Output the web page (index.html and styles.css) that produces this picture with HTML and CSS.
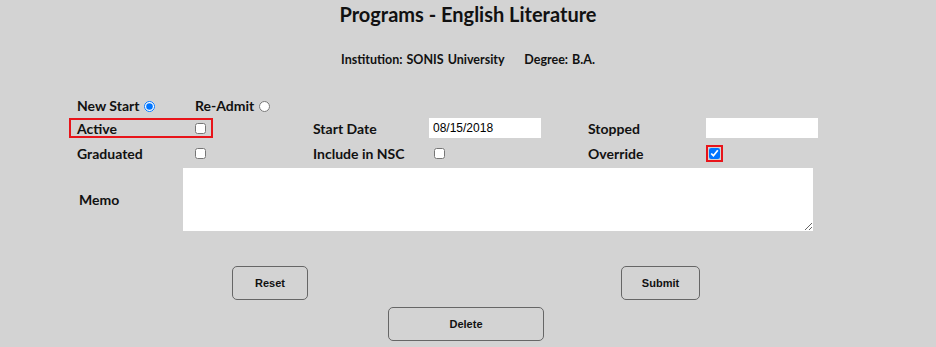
FILE: index.html
```html
<!DOCTYPE html>
<html lang="en">
  <head>
    <meta charset="utf-8" />
    <title>Programs - English Literature</title>
    <link rel="stylesheet" href="styles.css">
  </head>
  <body>
    <h1 class="title">Programs - English Literature</h1>
    <div class="info">
      <span>Institution: SONIS University</span>
      <span>Degree: B.A.</span>
    </div>

    <form class="program-form">
      <!-- start type -->
      <div class="row row-start">
        <label class="start-opt start-new">New Start <input type="radio" name="start" checked></label>
        <label class="start-opt">Re-Admit <input type="radio" name="start"></label>
      </div>

      <div class="row row-mid">
        <div class="cell cell-a flagged">
          <span>Active</span>
          <input type="checkbox">
        </div>
        <div class="cell cell-b"></div>
        <div class="cell cell-c"><span>Start Date</span></div>
        <div class="cell cell-d"><input class="text-input" type="text" value="08/15/2018"></div>
        <div class="cell cell-e"><span>Stopped</span></div>
        <div class="cell cell-f"><input class="text-input" type="text"></div>
      </div>

      <div class="row row-low">
        <div class="cell cell-a">
          <span>Graduated</span>
          <input type="checkbox">
        </div>
        <div class="cell cell-b"></div>
        <div class="cell cell-c"><span>Include in NSC</span></div>
        <div class="cell cell-d"><input class="nsc-check" type="checkbox"></div>
        <div class="cell cell-e"><span>Override</span></div>
        <div class="cell cell-f"><input class="override-check" type="checkbox" checked></div>
      </div>

      <div class="row row-memo">
        <label class="memo-label">Memo</label>
        <textarea class="memo"></textarea>
      </div>

      <div class="buttons buttons-top">
        <button type="button" class="btn btn-reset">Reset</button>
        <button type="button" class="btn btn-submit">Submit</button>
      </div>
      <div class="buttons">
        <button type="button" class="btn btn-delete">Delete</button>
      </div>
    </form>
  </body>
</html>
```

FILE: styles.css
```css
* {
  box-sizing: border-box;
}

body {
  margin: 0;
  background-color: #d3d3d3;
  color: #111;
  font-family: Lato, "DejaVu Sans", sans-serif;
  font-weight: bold;
}

.title {
  margin: 2px 0 0;
  font-size: 20px;
  line-height: 24px;
  text-align: center;
}

.info {
  margin-top: 26px;
  font-size: 12.5px;
  line-height: 16px;
  text-align: center;
  word-spacing: 1px;
}

.info span + span {
  margin-left: 16px;
}

.program-form {
  font-size: 14px;
}

.row {
  display: flex;
  align-items: center;
}

/* start type radios */
.row-start {
  margin-top: 28px;
  height: 18px;
  padding-left: 77px;
}

.start-opt {
  display: flex;
  align-items: center;
}

.start-new {
  width: 118px;
}

input[type="radio"] {
  width: 11px;
  height: 11px;
  margin: 2px 0 0 5px;
}

input[type="checkbox"] {
  width: 11px;
  height: 11px;
  margin: 0;
}

.row-mid {
  margin-top: 4px;
  height: 20px;
  padding-left: 69px;
}

.row-low {
  margin-top: 6px;
  height: 18px;
  padding-left: 69px;
}

.cell {
  display: flex;
  align-items: center;
  height: 100%;
}

.cell-a {
  width: 144px;
  padding: 0 5px 0 6px;
  justify-content: space-between;
  border: 2px solid transparent;
}

.cell-a.flagged {
  border-color: #e8141a;
}

.cell-b { width: 100px; }
.cell-c { width: 116px; }
.cell-d { width: 159px; }
.cell-e { width: 118px; }
.cell-f { width: 112px; }

.text-input {
  width: 112px;
  height: 20px;
  border: 0;
  padding: 0 4px;
  font-family: "Liberation Sans", Arial, sans-serif;
  font-size: 12px;
  background: white;
  color: black;
}

.nsc-check {
  margin-left: 5px !important;
}

.override-check {
  margin-left: 3px !important;
  outline: 2px solid #e8141a;
  outline-offset: 1px;
}

/* memo */
.row-memo {
  margin-top: 6px;
  padding-left: 79px;
}

.memo-label {
  width: 104px;
}

.memo {
  width: 630px;
  height: 63px;
  border: 0;
  background: white;
  resize: both;
}

.buttons {
  display: flex;
}

.buttons-top {
  margin-top: 35px;
}

.btn {
  height: 34px;
  background: transparent;
  border: 1px solid #666;
  border-radius: 5px;
  font-family: "Liberation Sans", Arial, sans-serif;
  font-weight: bold;
  font-size: 11px;
  color: #111;
}

.btn-reset {
  margin-left: 232px;
  width: 76px;
}

.btn-submit {
  margin-left: 313px;
  width: 79px;
}

.btn-delete {
  margin-top: 7px;
  margin-left: 388px;
  width: 156px;
}
```
